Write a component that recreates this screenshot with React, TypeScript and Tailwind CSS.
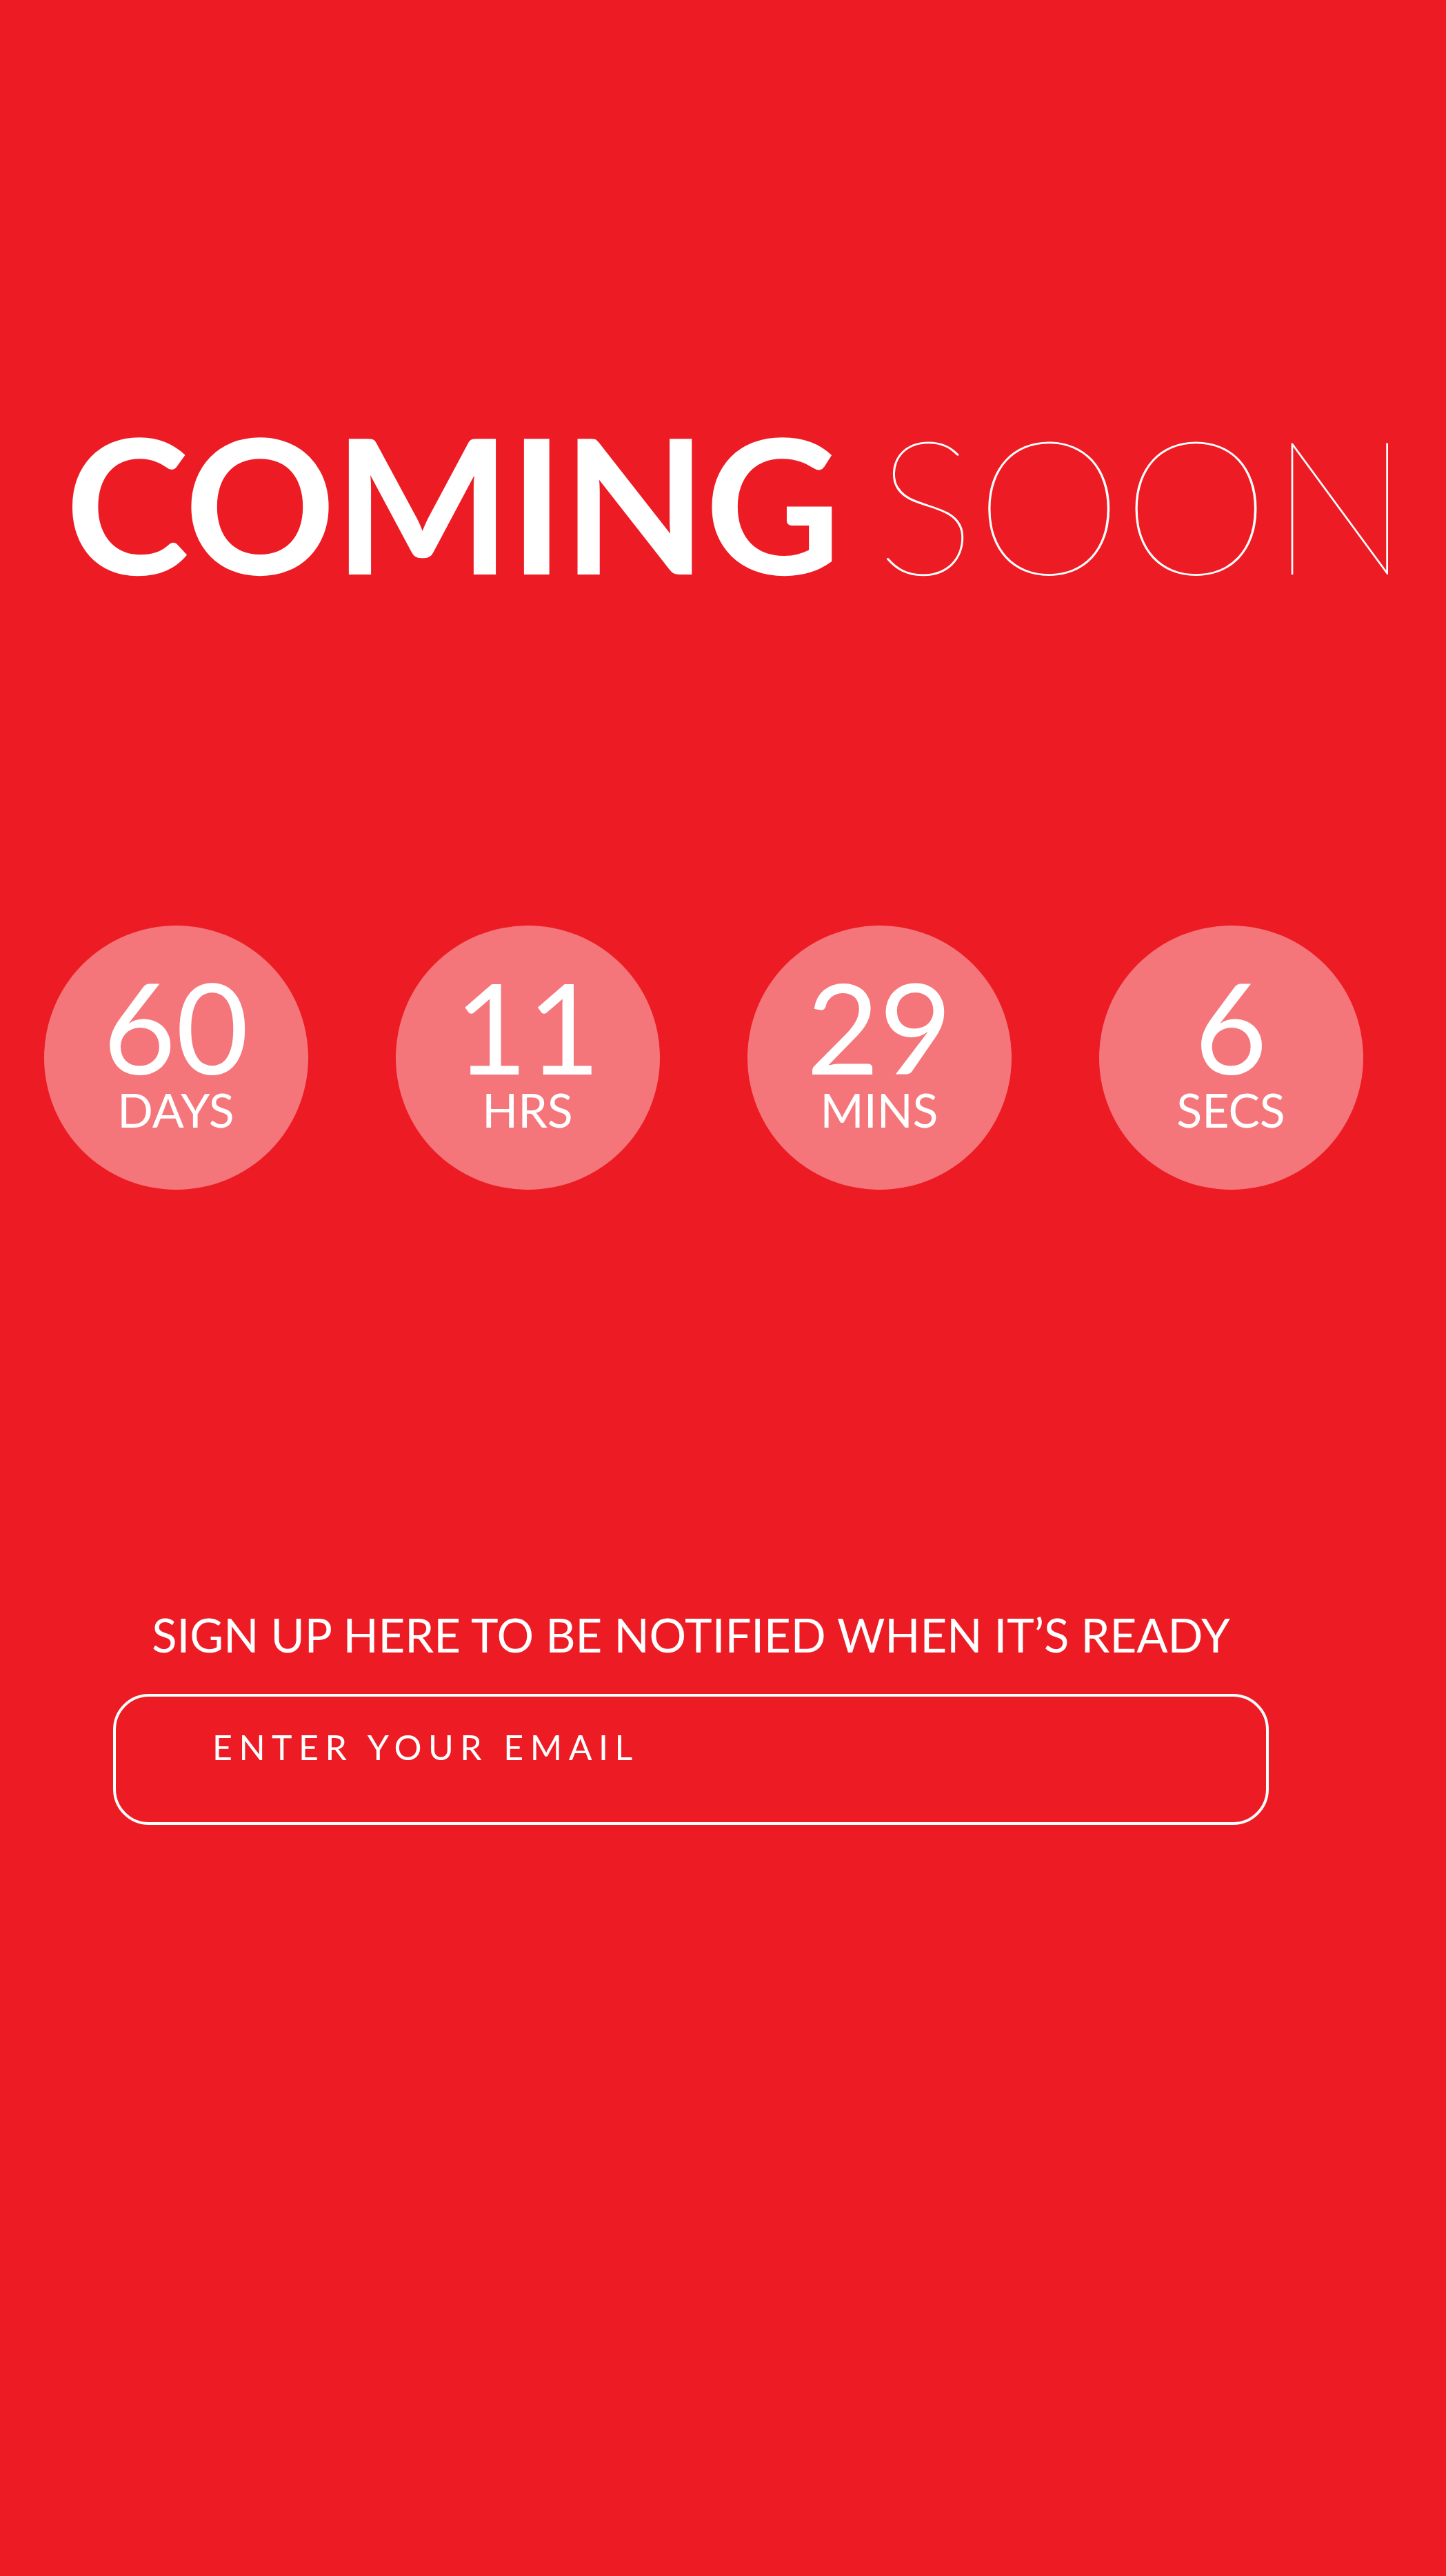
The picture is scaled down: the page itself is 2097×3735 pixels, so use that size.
const units = [
  { value: "60", label: "DAYS" },
  { value: "11", label: "HRS" },
  { value: "29", label: "MINS" },
  { value: "6", label: "SECS" },
]

export default function App() {
  return (
    <div className="h-[3735px] w-full bg-[#ed1c24] font-['Lato',sans-serif] text-white">
      <h1 className="pl-[42px] pt-[592px] text-center text-[272px] leading-none">
        <span className="font-bold tracking-[-3px]">COMING</span>
        <span className="ml-[54px] font-thin">SOON</span>
      </h1>

      <div className="mt-[478px] grid w-[2040px] grid-cols-4">
        {units.map((unit) => (
          <div key={unit.label} className="flex justify-center">
            <div className="flex h-[383px] w-[383px] flex-col items-center rounded-full bg-white/40 pt-[64px]">
              <span className="text-[182px] leading-[0.9]">{unit.value}</span>
              <span className="mt-[5px] text-[68px] leading-none">{unit.label}</span>
            </div>
          </div>
        ))}
      </div>

      <div className="ml-[164px] mt-[612px] w-[1676px]">
        <p className="text-center text-[67px] leading-none">SIGN UP HERE TO BE NOTIFIED WHEN IT’S READY</p>
        <input
          type="email"
          placeholder="ENTER YOUR EMAIL"
          className="mt-[52px] block h-[190px] w-full rounded-[52px] border-4 border-white bg-transparent pb-[37px] pl-[140px] pt-0 text-[50px] leading-none tracking-[0.19em] text-white outline-none placeholder:text-white"
        />
      </div>
    </div>
  )
}
